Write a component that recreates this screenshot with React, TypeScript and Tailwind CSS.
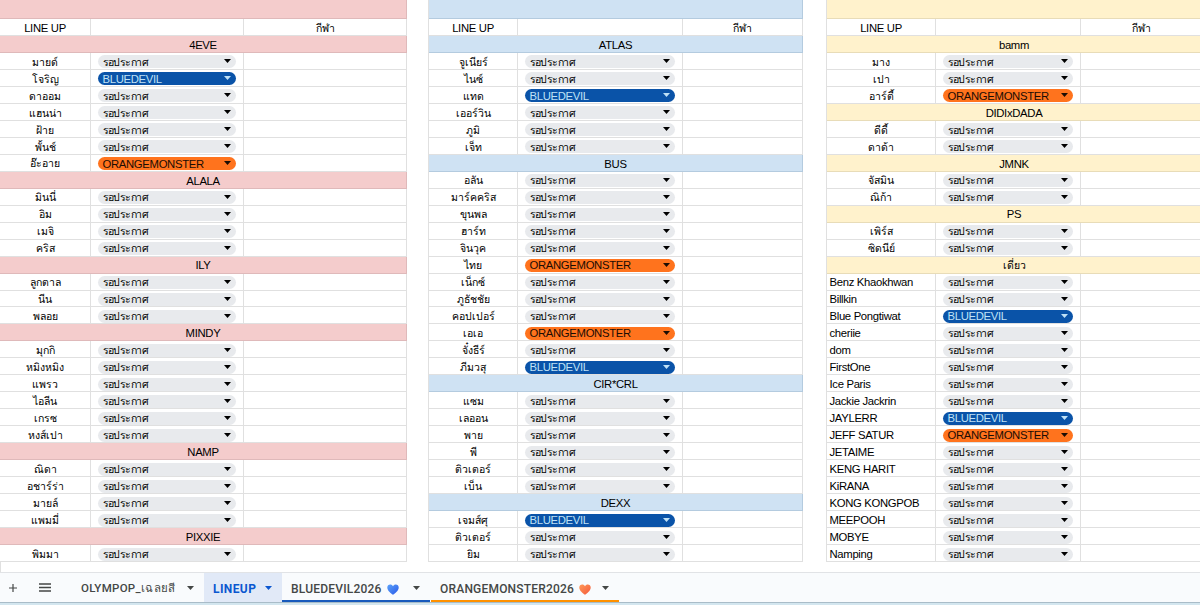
import { Fragment } from 'react'
import clsx from 'clsx'

type Status = 'wait' | 'blue' | 'orange'
type Member = string | [string, Status]

interface Group {
  title: string
  members: Member[]
}

interface Panel {
  frame: string
  band: string
  name: string
  team: string
  groups: Group[]
}

const panels: Panel[] = [
  {
    frame: 'w-[407px]',
    band: 'bg-[#f4cccc] border-[#dfb9ba]',
    name: 'w-[91px]',
    team: 'w-[153px]',
    groups: [
      { title: '4EVE', members: ['มายด์', ['โจริญ', 'blue'], 'ดาออม', 'แฮนน่า', 'ฝ้าย', 'พั้นช์', ['อ๊ะอาย', 'orange']] },
      { title: 'ALALA', members: ['มินนี่', 'อิม', 'เมจิ', 'คริส'] },
      { title: 'ILY', members: ['ลูกตาล', 'นีน', 'พลอย'] },
      { title: 'MINDY', members: ['มุกกิ', 'หมิงหมิง', 'แพรว', 'ไอลีน', 'เกรซ', 'หงส์เปา'] },
      { title: 'NAMP', members: ['ณิดา', 'อชาร์ร่า', 'มายล์', 'แพมมี่'] },
      { title: 'PIXXIE', members: ['พิมมา'] },
    ],
  },
  {
    frame: 'ml-[21px] w-[375px] border-l border-[#e0e0e0]',
    band: 'bg-[#cfe2f3] border-[#b4cbdf]',
    name: 'w-[89px]',
    team: 'w-[165px]',
    groups: [
      { title: 'ATLAS', members: ['จูเนียร์', 'ไนซ์', ['แทด', 'blue'], 'เออร์วิน', 'ภูมิ', 'เจ็ท'] },
      {
        title: 'BUS',
        members: [
          'อลัน', 'มาร์คคริส', 'ขุนพล', 'ฮาร์ท', 'จินวุค', ['ไทย', 'orange'], 'เน็กซ์', 'ภูธัชชัย', 'คอปเปอร์',
          ['เอเอ', 'orange'], 'จั๋งธีร์', ['ภีมวสุ', 'blue'],
        ],
      },
      { title: 'CIR*CRL', members: ['แซม', 'เลออน', 'พาย', 'พี', 'ติวเตอร์', 'เบ็น'] },
      { title: 'DEXX', members: [['เจมส์ศุ', 'blue'], 'ติวเตอร์', 'ยิม'] },
    ],
  },
  {
    frame: 'ml-[23px] w-[376px] border-l border-[#e0e0e0]',
    band: 'bg-[#fff2cc] border-[#e8dcb8]',
    name: 'w-[109px]',
    team: 'w-[145px]',
    groups: [
      { title: 'bamm', members: ['มาง', 'เปา', ['อาร์ตี้', 'orange']] },
      { title: 'DIDIxDADA', members: ['ดีดี้', 'ดาด้า'] },
      { title: 'JMNK', members: ['จัสมิน', 'ณิก้า'] },
      { title: 'PS', members: ['เพิร์ส', 'ซิดนีย์'] },
      {
        title: 'เดี่ยว',
        members: [
          'Benz Khaokhwan', 'Billkin', ['Blue Pongtiwat', 'blue'], 'cheriie', 'dom', 'FirstOne', 'Ice Paris',
          'Jackie Jackrin', ['JAYLERR', 'blue'], ['JEFF SATUR', 'orange'], 'JETAIME', 'KENG HARIT', 'KiRANA',
          'KONG KONGPOB', 'MEEPOOH', 'MOBYE', 'Namping',
        ],
      },
    ],
  },
]

const chips: Record<Status, { label: string; style: string }> = {
  wait: { label: 'รอประกาศ', style: 'bg-[#e8eaed] text-black tracking-[-0.55px]' },
  blue: { label: 'BLUEDEVIL', style: 'bg-[#0a53a8] text-[#bfe1f6]' },
  orange: { label: 'ORANGEMONSTER', style: 'bg-[#ff731d] text-[#1c0d04]' },
}

const isThai = (text: string) => /[\u0e00-\u0e7f]/.test(text)

function Label({ text }: { text: string }) {
  return (
    <span
      className={clsx('whitespace-nowrap', isThai(text) ? 'text-[10.5px] font-medium' : 'pt-px text-[11.3px] tracking-[-0.32px]')}
    >
      {text}
    </span>
  )
}

function Caret({ className }: { className?: string }) {
  return (
    <svg viewBox="0 0 7 4" className={clsx('h-1 w-[7px] shrink-0', className)} fill="currentColor">
      <path d="M0 0h7L3.5 4z" />
    </svg>
  )
}

function Chip({ status }: { status: Status }) {
  const { label, style } = chips[status]
  return (
    <div className={clsx('flex h-[13px] w-full items-center justify-between rounded-full pr-[5px] pl-[4.5px]', style)}>
      <Label text={label} />
      <Caret className="mb-px" />
    </div>
  )
}

const row = 'flex h-[16.98px] shrink-0'
const cell = 'flex items-center border-b border-[#e0e0e0] pt-0.5'

function SheetPanel({ panel }: { panel: Panel }) {
  const { frame, band, name, team, groups } = panel
  return (
    <section className={clsx('flex shrink-0 flex-col overflow-hidden', frame)}>
      <div className={clsx('h-[19px] shrink-0 border-r border-b', band)} />
      <div className={row}>
        <div className={clsx(cell, name, 'justify-center border-r')}>
          <Label text="LINE UP" />
        </div>
        <div className={clsx(cell, team, 'border-r')} />
        <div className={clsx(cell, 'flex-1 justify-center border-r')}>
          <Label text="กีฬา" />
        </div>
      </div>
      {groups.map((group) => (
        <Fragment key={group.title}>
          <div className={clsx(row, 'items-center justify-center border-r border-b pt-0.5', band)}>
            <Label text={group.title} />
          </div>
          {group.members.map((member) => {
            const [label, status]: [string, Status] = typeof member === 'string' ? [member, 'wait'] : member
            return (
              <div key={label} className={row}>
                <div className={clsx(cell, name, 'border-r', isThai(label) ? 'justify-center' : 'pl-[2.5px]')}>
                  <Label text={label} />
                </div>
                <div className={clsx(cell, team, 'border-r px-[7px]')}>
                  <Chip status={status} />
                </div>
                <div className={clsx(cell, 'flex-1 border-r')} />
              </div>
            )
          })}
        </Fragment>
      ))}
    </section>
  )
}

function Heart({ id, from, to }: { id: string; from: string; to: string }) {
  return (
    <svg viewBox="0 0 12 11" className="h-[11px] w-3 shrink-0">
      <defs>
        <linearGradient id={id} x1="0" y1="0" x2="1" y2="1">
          <stop offset="0" stopColor={from} />
          <stop offset="1" stopColor={to} />
        </linearGradient>
      </defs>
      <path
        d="M6 10.8C4 9.4.3 6.8.3 3.5.3 1.7 1.6.5 3.2.5 4.4.5 5.4 1.1 6 2.2 6.6 1.1 7.6.5 8.8.5c1.6 0 2.9 1.2 2.9 3C11.7 6.8 8 9.4 6 10.8z"
        fill={`url(#${id})`}
      />
    </svg>
  )
}

function TabBar() {
  return (
    <nav className="flex h-[30px] shrink-0 items-stretch border-t border-[#e1e3e6] bg-[#f9fbfd] font-[Roboto,'Noto_Sans',sans-serif] text-[11.5px] font-medium tracking-[0.3px] text-[#444746]">
      <button className="flex w-[26px] items-center justify-center" aria-label="Add sheet">
        <svg viewBox="0 0 8 8" className="h-2 w-2" stroke="#444746" strokeWidth="1.2">
          <path d="M4 0v8M0 4h8" />
        </svg>
      </button>
      <button className="flex w-[38px] items-center justify-center" aria-label="All sheets">
        <svg viewBox="0 0 12 9" className="h-[9px] w-3" stroke="#444746" strokeWidth="1.3">
          <path d="M0 1h12M0 4.5h12M0 8h12" />
        </svg>
      </button>
      <button className="flex w-[140px] items-center justify-between pr-[10px] pl-[17px]">
        <span className="pt-0.5">OLYMPOP_เฉลยสี</span>
        <Caret />
      </button>
      <button className="flex w-[78px] items-center justify-between bg-[#e1e9f7] pr-[10px] pl-[9px] text-xs font-bold tracking-[0.4px] text-[#0b57d0]">
        <span className="pt-0.5">LINEUP</span>
        <Caret />
      </button>
      <button className="flex w-[148px] items-center pr-[10px] pl-[9px] text-xs tracking-[0.2px] shadow-[inset_0_-2px_#185abc]">
        <span className="pt-[3px]">BLUEDEVIL2026</span>
        <span className="ml-[5px] flex pt-[3px]">
          <Heart id="blueHeart" from="#5aa2fa" to="#2a58e8" />
        </span>
        <Caret className="ml-auto" />
      </button>
      <button className="ml-px flex w-[188px] items-center pr-[10px] pl-[9px] text-xs tracking-[0.2px] shadow-[inset_0_-2px_#ff9100]">
        <span className="pt-[3px]">ORANGEMONSTER2026</span>
        <span className="ml-[5px] flex pt-[3px]">
          <Heart id="orangeHeart" from="#ff9957" to="#f4583c" />
        </span>
        <Caret className="ml-auto" />
      </button>
    </nav>
  )
}

export default function App() {
  return (
    <div className="flex h-[605px] w-[1200px] flex-col overflow-hidden bg-white font-['Liberation_Sans','Noto_Sans',sans-serif] leading-none text-black">
      <main className="flex h-[562px] shrink-0 overflow-hidden">
        {panels.map((panel) => (
          <SheetPanel key={panel.groups[0].title} panel={panel} />
        ))}
      </main>
      <div className="h-2.5 shrink-0 border-l border-[#e0e0e0]" />
      <TabBar />
      <div className="h-[3px] border-t border-[#a9bcc8] bg-[#d3e6ef]" />
    </div>
  )
}
